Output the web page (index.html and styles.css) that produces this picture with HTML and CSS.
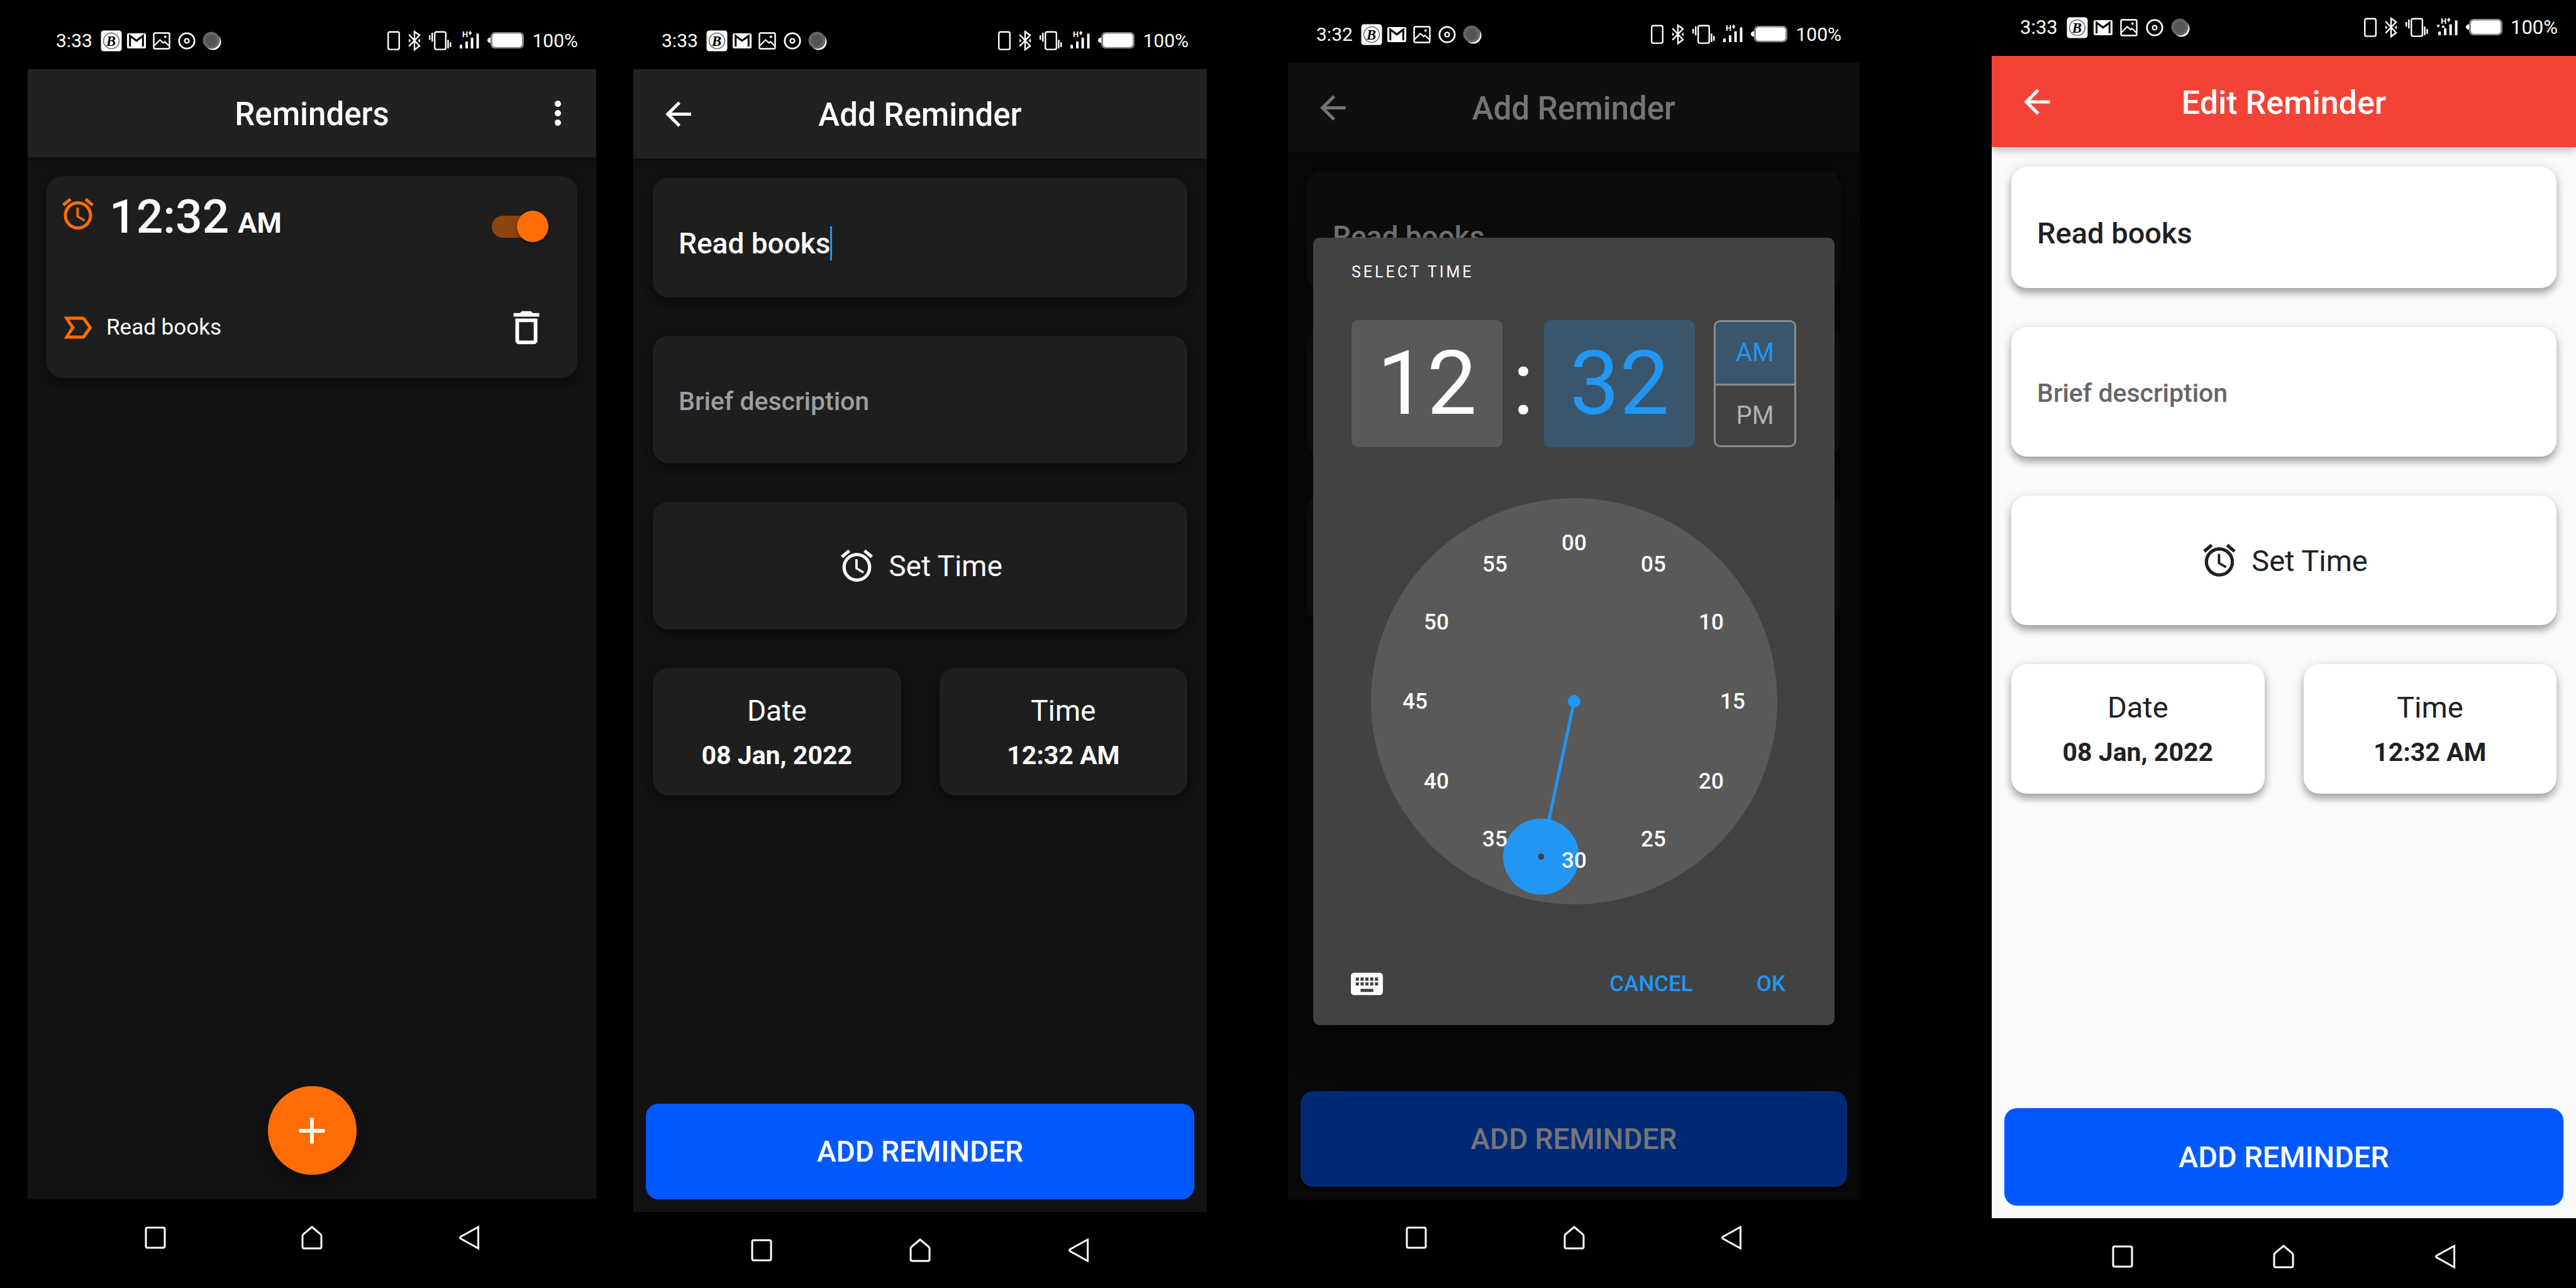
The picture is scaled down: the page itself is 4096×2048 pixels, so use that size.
FILE: index.html
```html
<!DOCTYPE html>
<html lang="en">
<head>
<meta charset="utf-8">
<meta name="viewport" content="width=device-width, initial-scale=1">
<title>Reminders</title>
<link rel="stylesheet" href="styles.css">
</head>
<body>
<svg class="sprite" aria-hidden="true">
  <symbol id="i-app" viewBox="0 0 34 34">
    <rect x=".5" y=".5" width="33" height="33" rx="4.5" fill="#fff"/>
    <circle cx="17" cy="17" r="12.4" fill="none" stroke="#666" stroke-width="1.5"/>
    <text x="16.5" y="25" text-anchor="middle" class="glyph-b">B</text>
  </symbol>
  <symbol id="i-mail" viewBox="0 0 34 34">
    <rect x="2" y="5" width="30" height="24" rx="2.5" fill="#fff"/>
    <path d="M6.7 26V9L17 16.8 27.3 9V26" fill="none" stroke="#000" stroke-width="3"/>
  </symbol>
  <symbol id="i-image" viewBox="0 0 34 34" fill="none" stroke="#fff">
    <rect x="4.5" y="4.5" width="25" height="25" rx="2" stroke-width="2.4"/>
    <path d="M5 24.8 14.4 15.4 19.8 20.2 21.8 18.2 29 25" stroke-width="2.2"/>
    <circle cx="22.8" cy="10.6" r="2" fill="#fff" stroke="none"/>
  </symbol>
  <symbol id="i-target" viewBox="0 0 34 34" fill="none" stroke="#fff">
    <circle cx="17" cy="17" r="12.2" stroke-width="2.8"/>
    <circle cx="17" cy="17" r="3.4" stroke-width="2.4"/>
  </symbol>
  <symbol id="i-disc" viewBox="0 0 34 34">
    <circle cx="18.5" cy="18.5" r="13" fill="#fff"/>
    <circle cx="16" cy="16" r="13.6" fill="#555"/>
    <circle cx="16" cy="16" r="11" fill="none" stroke="#868686" stroke-width="4" stroke-dasharray="1 2"/>
  </symbol>
  <symbol id="i-sim" viewBox="0 0 20 34">
    <rect x="1.2" y="2.8" width="17.6" height="27.8" rx="2.6" fill="none" stroke="#fff" stroke-width="2.4"/>
  </symbol>
  <symbol id="i-bt" viewBox="0 0 20 34">
    <path d="M1.2 7 18 25 10 31V2.2L18 8 1.2 25.6" fill="none" stroke="#fff" stroke-width="2.4"/>
    <path d="M1 13.5 4.6 16.4 1 19.4zM19 13.5 15.4 16.4 19 19.4z" fill="#fff"/>
  </symbol>
  <symbol id="i-vib" viewBox="0 0 36 34">
    <rect x="9.2" y="2.8" width="17.6" height="27.8" rx="2.6" fill="none" stroke="#fff" stroke-width="2.4"/>
    <path d="M0 8h2.5v7.3H0zM4 4h2.5v14.3H4zM29.2 15.3h2.5V29h-2.5zM33 19.3h2.5v7.4H33z" fill="#fff"/>
  </symbol>
  <symbol id="i-signal" viewBox="0 0 31 34">
    <path d="M0 23.2h4V29H0zM9 18h4v11H9zM17.6 11.8h4V29h-4zM26.5 5.5h4V29h-4z" fill="#fff"/>
    <text x="4" y="10.5" class="glyph-h">H</text>
    <path d="M14 4.6 16.6 1 19.2 4.6 16.6 8.2z" fill="#fff"/>
  </symbol>
  <symbol id="i-signal-data" viewBox="0 0 34 34">
    <path d="M3 23.2h4V29H3zM12 18h4v11h-4zM20.6 11.8h4V29h-4zM29.5 5.5h4V29h-4z" fill="#fff"/>
    <text x="7" y="10.5" class="glyph-h">H</text>
    <path d="M17 4.6 19.6 1 22.2 4.6 19.6 8.2zM0 12.5h6L3 17zM8 17h6l-3-4.5z" fill="#fff"/>
  </symbol>
  <symbol id="i-batt" viewBox="0 0 58 34">
    <path d="M5 11.5v9c-3-.3-5-2-5-4.5s2-4.2 5-4.5z" fill="#fff"/>
    <rect x="5" y="3" width="53" height="26.2" rx="7" fill="#858585"/>
    <rect x="8" y="5.4" width="47" height="21.4" rx="5" fill="#fff"/>
  </symbol>
  <symbol id="i-back" viewBox="0 0 24 24"><path d="M20 11H7.83l5.59-5.59L12 4l-8 8 8 8 1.41-1.41L7.83 13H20v-2z" fill="currentColor"/></symbol>
  <symbol id="i-more" viewBox="0 0 24 24"><path d="M12 8c1.1 0 2-.9 2-2s-.9-2-2-2-2 .9-2 2 .9 2 2 2zm0 2c-1.1 0-2 .9-2 2s.9 2 2 2 2-.9 2-2-.9-2-2-2zm0 6c-1.1 0-2 .9-2 2s.9 2 2 2 2-.9 2-2-.9-2-2-2z" fill="currentColor"/></symbol>
  <symbol id="i-alarm" viewBox="0 0 24 24"><path d="M22 5.72l-4.6-3.86-1.29 1.53 4.6 3.86L22 5.72zM7.88 3.39L6.6 1.86 2 5.71l1.29 1.53 4.59-3.85zM12.5 8H11v6l4.75 2.85.75-1.23-4-2.37V8zM12 4c-4.97 0-9 4.03-9 9s4.02 9 9 9a9 9 0 0 0 0-18zm0 16c-3.87 0-7-3.13-7-7s3.13-7 7-7 7 3.13 7 7-3.13 7-7 7z" fill="currentColor"/></symbol>
  <symbol id="i-label" viewBox="0 0 24 24"><path d="M15 19H3l4.5-7L3 5h12c.65 0 1.26.31 1.63.84L21 12l-4.37 6.16c-.37.52-.98.84-1.63.84zm-8.5-2H15l3.5-5L15 7H6.5l3.5 5-3.5 5z" fill="currentColor"/></symbol>
  <symbol id="i-trash" viewBox="0 0 24 24"><path d="M6 19c0 1.1.9 2 2 2h8c1.1 0 2-.9 2-2V7H6v12zM8 9h8v10H8V9zm7.5-5l-1-1h-5l-1 1H5v2h14V4h-3.5z" fill="currentColor"/></symbol>
  <symbol id="i-plus" viewBox="0 0 24 24"><path d="M19 13h-6v6h-2v-6H5v-2h6V5h2v6h6v2z" fill="currentColor"/></symbol>
  <symbol id="i-keys" viewBox="0 0 24 24"><path d="M20 5H4c-1.1 0-1.99.9-1.99 2L2 17c0 1.1.9 2 2 2h16c1.1 0 2-.9 2-2V7c0-1.1-.9-2-2-2zm-9 3h2v2h-2V8zm0 3h2v2h-2v-2zM8 8h2v2H8V8zm0 3h2v2H8v-2zm-1 2H5v-2h2v2zm0-3H5V8h2v2zm9 7H8v-2h8v2zm0-4h-2v-2h2v2zm0-3h-2V8h2v2zm3 3h-2v-2h2v2zm0-3h-2V8h2v2z" fill="currentColor"/></symbol>
  <symbol id="i-recent" viewBox="0 0 40 40"><rect x="5" y="4" width="30" height="32" rx="2.5" fill="none" stroke="#fff" stroke-width="3"/></symbol>
  <symbol id="i-home" viewBox="0 0 40 40"><path d="M20 3 33.5 14.3Q35 15.7 35 17.5V34.5Q35 37 32.5 37H7.5Q5 37 5 34.5V17.5Q5 15.7 6.5 14.3Z" fill="none" stroke="#fff" stroke-width="3"/></symbol>
  <symbol id="i-prev" viewBox="0 0 40 40"><path d="M34.5 3V37L6.5 21.6Q4.5 20 6.5 18.4Z" fill="none" stroke="#fff" stroke-width="3"/></symbol>
</svg>

<main class="gallery">
  <section class="phone phone-list" aria-label="Reminder list">
    <div class="status">
      <div class="status-group notices">
        <span class="clock">3:33</span>
        <svg class="note"><use href="#i-app"/></svg><svg class="note"><use href="#i-mail"/></svg><svg class="note"><use href="#i-image"/></svg><svg class="note"><use href="#i-target"/></svg><svg class="note"><use href="#i-disc"/></svg>
      </div>
      <div class="status-group system">
        <svg class="w20"><use href="#i-sim"/></svg><svg class="w20"><use href="#i-bt"/></svg><svg class="w36"><use href="#i-vib"/></svg><svg class="w31"><use href="#i-signal"/></svg><svg class="w58"><use href="#i-batt"/></svg>
        <span>100%</span>
      </div>
    </div>
    <div class="app">
      <header class="appbar">
        <h1>Reminders</h1>
        <button class="icon-button more" aria-label="More options"><svg class="icon"><use href="#i-more"/></svg></button>
      </header>
      <div class="content">
        <article class="card reminder">
          <div class="row row-time">
            <svg class="icon accent"><use href="#i-alarm"/></svg>
            <p class="time"><span>12:32</span> <small>AM</small></p>
            <input class="switch" type="checkbox" role="switch" checked aria-label="Reminder on">
          </div>
          <div class="row row-name">
            <svg class="icon accent"><use href="#i-label"/></svg>
            <p class="name">Read books</p>
            <button class="icon-button" aria-label="Delete reminder"><svg class="icon icon-large"><use href="#i-trash"/></svg></button>
          </div>
        </article>
        <button class="fab" aria-label="New reminder"><svg class="icon icon-large"><use href="#i-plus"/></svg></button>
      </div>
    </div>
    <nav class="navbar" aria-label="System">
      <button aria-label="Recent apps"><svg><use href="#i-recent"/></svg></button><button aria-label="Home"><svg><use href="#i-home"/></svg></button><button aria-label="Back"><svg><use href="#i-prev"/></svg></button>
    </nav>
  </section>

  <section class="phone phone-add" aria-label="Add reminder">
    <div class="status">
      <div class="status-group notices">
        <span class="clock">3:33</span>
        <svg class="note"><use href="#i-app"/></svg><svg class="note"><use href="#i-mail"/></svg><svg class="note"><use href="#i-image"/></svg><svg class="note"><use href="#i-target"/></svg><svg class="note"><use href="#i-disc"/></svg>
      </div>
      <div class="status-group system">
        <svg class="w20"><use href="#i-sim"/></svg><svg class="w20"><use href="#i-bt"/></svg><svg class="w36"><use href="#i-vib"/></svg><svg class="w31"><use href="#i-signal"/></svg><svg class="w58"><use href="#i-batt"/></svg>
        <span>100%</span>
      </div>
    </div>
    <div class="app">
      <header class="appbar">
        <button class="icon-button back" aria-label="Back"><svg class="icon"><use href="#i-back"/></svg></button>
        <h1>Add Reminder</h1>
      </header>
      <form class="content">
        <div class="fields">
          <label class="card field field-title"><input type="text" value="Read books" size="10" aria-label="Title"><span class="caret"></span></label>
          <label class="card field field-note"><input type="text" placeholder="Brief description" aria-label="Brief description"></label>
          <button type="button" class="card set-time"><svg class="icon"><use href="#i-alarm"/></svg>Set Time</button>
          <div class="pair">
            <div class="card fact"><span>Date</span><strong>08 Jan, 2022</strong></div>
            <div class="card fact"><span>Time</span><strong>12:32 AM</strong></div>
          </div>
        </div>
        <button type="button" class="submit">ADD REMINDER</button>
      </form>
    </div>
    <nav class="navbar" aria-label="System">
      <button aria-label="Recent apps"><svg><use href="#i-recent"/></svg></button><button aria-label="Home"><svg><use href="#i-home"/></svg></button><button aria-label="Back"><svg><use href="#i-prev"/></svg></button>
    </nav>
  </section>

  <section class="phone phone-picker" aria-label="Select time">
    <div class="status">
      <div class="status-group notices">
        <span class="clock">3:32</span>
        <svg class="note"><use href="#i-app"/></svg><svg class="note"><use href="#i-mail"/></svg><svg class="note"><use href="#i-image"/></svg><svg class="note"><use href="#i-target"/></svg><svg class="note"><use href="#i-disc"/></svg>
      </div>
      <div class="status-group system">
        <svg class="w20"><use href="#i-sim"/></svg><svg class="w20"><use href="#i-bt"/></svg><svg class="w36"><use href="#i-vib"/></svg><svg class="w31"><use href="#i-signal"/></svg><svg class="w58"><use href="#i-batt"/></svg>
        <span>100%</span>
      </div>
    </div>
    <div class="app">
      <header class="appbar">
        <button class="icon-button back" aria-label="Back"><svg class="icon"><use href="#i-back"/></svg></button>
        <h1>Add Reminder</h1>
      </header>
      <form class="content">
        <div class="fields">
          <label class="card field field-title"><input type="text" value="Read books" size="10" aria-label="Title"></label>
          <div class="card field field-note"></div>
          <div class="card set-time"></div>
        </div>
        <button type="button" class="submit">ADD REMINDER</button>
      </form>
      <div class="scrim">
        <div class="dialog" role="dialog" aria-label="Select time">
          <h2>SELECT TIME</h2>
          <div class="digits">
            <button class="digit">12</button>
            <span class="colon">:</span>
            <button class="digit selected">32</button>
            <div class="period">
              <button class="selected">AM</button>
              <button>PM</button>
            </div>
          </div>
          <svg class="dial" viewBox="0 0 646 646" role="img" aria-label="Minute dial">
            <circle cx="323" cy="323" r="323" fill="#595959"/>
            <g fill="#2196f3">
              <path d="M323 323 270.5 570" stroke="#2196f3" stroke-width="5"/>
              <circle cx="323" cy="323" r="10"/>
              <circle cx="270.5" cy="570" r="60.5"/>
            </g>
            <circle cx="270.5" cy="570" r="5" fill="#424242"/>
            <g class="ticks">
              <text x="323" y="83">00</text><text x="449" y="117">05</text><text x="541" y="209">10</text><text x="575" y="335">15</text>
              <text x="541" y="462">20</text><text x="449" y="554">25</text><text x="323" y="588">30</text><text x="197" y="554">35</text>
              <text x="104" y="462">40</text><text x="70" y="335">45</text><text x="104" y="209">50</text><text x="197" y="117">55</text>
            </g>
          </svg>
          <div class="actions">
            <button class="icon-button" aria-label="Keyboard input"><svg class="icon"><use href="#i-keys"/></svg></button>
            <button class="text-button">CANCEL</button>
            <button class="text-button">OK</button>
          </div>
        </div>
      </div>
    </div>
    <nav class="navbar" aria-label="System">
      <button aria-label="Recent apps"><svg><use href="#i-recent"/></svg></button><button aria-label="Home"><svg><use href="#i-home"/></svg></button><button aria-label="Back"><svg><use href="#i-prev"/></svg></button>
    </nav>
  </section>

  <section class="phone phone-edit" aria-label="Edit reminder">
    <div class="status">
      <div class="status-group notices">
        <span class="clock">3:33</span>
        <svg class="note"><use href="#i-app"/></svg><svg class="note"><use href="#i-mail"/></svg><svg class="note"><use href="#i-image"/></svg><svg class="note"><use href="#i-target"/></svg><svg class="note"><use href="#i-disc"/></svg>
      </div>
      <div class="status-group system">
        <svg class="w20"><use href="#i-sim"/></svg><svg class="w20"><use href="#i-bt"/></svg><svg class="w36"><use href="#i-vib"/></svg><svg class="w34"><use href="#i-signal-data"/></svg><svg class="w58"><use href="#i-batt"/></svg>
        <span>100%</span>
      </div>
    </div>
    <div class="app">
      <header class="appbar">
        <button class="icon-button back" aria-label="Back"><svg class="icon"><use href="#i-back"/></svg></button>
        <h1>Edit Reminder</h1>
      </header>
      <form class="content">
        <div class="fields">
          <label class="card field field-title"><input type="text" value="Read books" size="10" aria-label="Title"></label>
          <label class="card field field-note"><input type="text" placeholder="Brief description" aria-label="Brief description"></label>
          <button type="button" class="card set-time"><svg class="icon"><use href="#i-alarm"/></svg>Set Time</button>
          <div class="pair">
            <div class="card fact"><span>Date</span><strong>08 Jan, 2022</strong></div>
            <div class="card fact"><span>Time</span><strong>12:32 AM</strong></div>
          </div>
        </div>
        <button type="button" class="submit">ADD REMINDER</button>
      </form>
    </div>
    <nav class="navbar" aria-label="System">
      <button aria-label="Recent apps"><svg><use href="#i-recent"/></svg></button><button aria-label="Home"><svg><use href="#i-home"/></svg></button><button aria-label="Back"><svg><use href="#i-prev"/></svg></button>
    </nav>
  </section>
</main>
</body>
</html>
```
FILE: styles.css
```css
*, *::before, *::after { box-sizing: border-box; }

body {
  margin: 0;
  background: #000;
  color: #fff;
  font-family: Roboto, "Noto Sans", sans-serif;
}

h1, h2, p { margin: 0; }

button, input {
  margin: 0;
  padding: 0;
  border: 0;
  background: none;
  color: inherit;
  font: inherit;
}

button { cursor: pointer; }

svg { display: block; flex: none; }

.sprite { display: none; }

.glyph-b { font: italic 700 23px "Liberation Serif", serif; fill: #000; }
.glyph-h { font: 700 13px Roboto, sans-serif; fill: #fff; }

/* Four screens side by side, separated by uneven gutters */
.gallery {
  display: grid;
  grid-template-columns: 44fr 904fr 59fr 912fr 129fr 909fr 210fr 929fr;
  min-height: 100vh;
}

.phone {
  --status: 110px;
  --status-text: 30px;
  --note-gap: 6px;
  --bar: 142px;
  --nav: 121px;
  --edge: 30px;
  --gap: 61px;
  --title: 51px;
  --heading: 46px;
  --text: 41px;
  --icon: 61px;
  --card: 203px;
  --card-first: 190px;
  --submit: 152px;
  --surface: #1e1e1e;
  --page: #121212;
  --bar-color: #212121;
  --hint: #9e9e9e;
  --shadow: 0 7px 12px rgba(0, 0, 0, .3), 0 2px 20px rgba(0, 0, 0, .14);
  display: flex;
  flex-direction: column;
  min-width: 0;
}

.phone-list { grid-column: 2; --bar: 140px; --nav: 141px; --icon: 60px; }
.phone-add { grid-column: 4; --edge: 31px; }
.phone-picker { grid-column: 6; --status: 100px; --nav: 141px; --gap: 60px; }
.phone-edit {
  grid-column: 8;
  --status: 89px;
  --status-text: 31px;
  --note-gap: 7px;
  --bar: 145px;
  --nav: 111px;
  --edge: 31px;
  --gap: 62px;
  --title: 52px;
  --heading: 47px;
  --icon: 62px;
  --card: 206px;
  --card-first: 193px;
  --submit: 155px;
  --surface: #fff;
  --page: #fafafa;
  --bar-color: #f44336;
  --hint: #666;
  --shadow: 0 8px 12px rgba(0, 0, 0, .3), 0 2px 20px rgba(0, 0, 0, .12);
}

/* Status bar */
.status {
  display: flex;
  justify-content: space-between;
  align-items: flex-end;
  height: var(--status);
  padding: 0 29px 28px 45px;
  font-size: var(--status-text);
  line-height: 34px;
}

.status-group { display: flex; align-items: center; }
.notices { gap: var(--note-gap); }
.clock { margin-right: 7px; }
.system { gap: 13px; }
.status svg { height: 34px; }
.note { width: 34px; }
.w20 { width: 20px; }
.w31 { width: 31px; }
.w34 { width: 34px; }
.w36 { width: 36px; }
.w58 { width: 58px; }

/* App frame */
.app {
  position: relative;
  display: flex;
  flex: 1;
  flex-direction: column;
  background: var(--page);
}

.appbar {
  position: relative;
  z-index: 1;
  display: grid;
  grid-template-columns: 1fr auto 1fr;
  align-items: center;
  height: var(--bar);
  background: var(--bar-color);
  box-shadow: 0 5px 12px rgba(0, 0, 0, .26);
}

.appbar h1 {
  grid-column: 2;
  padding-top: 4px;
  font-size: var(--title);
  font-weight: 500;
  line-height: 60px;
}

.icon { width: var(--icon); height: var(--icon); }
.icon-large { width: 70px; height: 70px; }
.icon-button { display: block; }
.back { justify-self: start; margin-left: 41px; }
.more { justify-self: end; margin-right: 31px; }
.accent { color: #ff6d04; }

.content { display: flex; flex: 1; flex-direction: column; }

.card {
  border-radius: 25px;
  background: var(--surface);
  box-shadow: var(--shadow);
}

/* Reminder list */
.reminder { margin: 30px 30px 0; padding: 20px 46px 45px 20px; }
.row { display: flex; }
.row-time { align-items: flex-start; gap: 20px; }
.row-time .icon { margin-top: 10px; }
.row-name { align-items: center; gap: 15px; margin-top: 98px; }
.time {
  display: flex;
  flex: 1;
  align-items: baseline;
  gap: 14px;
  font-size: 75px;
  font-weight: 500;
  line-height: 88px;
}
.time small { font-size: 45px; font-weight: 700; line-height: 54px; }
.name { flex: 1; font-size: 35px; line-height: 42px; }

.switch {
  position: relative;
  width: 90px;
  height: 50px;
  margin-top: 35px;
  appearance: none;
}

.switch::before {
  content: "";
  position: absolute;
  top: 8px;
  left: 0;
  width: 83px;
  height: 35px;
  border-radius: 18px;
  background: #8e440f;
}

.switch::after {
  content: "";
  position: absolute;
  top: 0;
  left: 0;
  width: 50px;
  height: 50px;
  border-radius: 50%;
  background: #ff6d04;
  box-shadow: 0 3px 6px rgba(0, 0, 0, .35);
}

.switch:checked::after { left: 40px; }

.fab {
  display: grid;
  place-items: center;
  align-self: center;
  width: 141px;
  height: 141px;
  margin: auto 0 39px;
  border-radius: 50%;
  background: #ff6d04;
  box-shadow: 0 12px 24px rgba(0, 0, 0, .35);
}

/* Reminder form */
.fields {
  display: flex;
  flex-direction: column;
  gap: var(--gap);
  padding: var(--edge);
}

.field, .set-time, .fact { display: flex; align-items: center; min-height: var(--card); }
.field { padding: 0 41px; font-weight: 500; }
.field input { outline: 0; }

.field-title {
  min-height: var(--card-first);
  padding-top: 18px;
  font-size: var(--heading);
}

.field-title input { height: 54px; field-sizing: content; }
.field-note { padding-top: 4px; font-size: var(--text); }
.field-note input { width: 100%; height: 48px; }
.field input::placeholder { color: var(--hint); opacity: 1; }
.caret { width: 3px; height: 54px; background: #2196f3; }

.set-time { justify-content: center; gap: 20px; font-size: var(--heading); }

.pair { display: grid; grid-template-columns: 1fr 1fr; gap: var(--gap); }
.fact {
  flex-direction: column;
  justify-content: center;
  gap: 20px;
  font-size: var(--heading);
  line-height: 54px;
}
.fact strong { font-size: var(--text); font-weight: 700; line-height: 48px; }

.submit {
  height: var(--submit);
  margin: auto 20px 20px;
  border-radius: 20px;
  background: #0059ff;
  color: #fff;
  font-size: var(--heading);
  font-weight: 500;
}

.phone-edit .content { color: #212121; }

/* Time picker */
.scrim {
  position: absolute;
  inset: 0;
  z-index: 2;
  display: grid;
  align-items: center;
  padding: 0 40px;
  background: rgba(0, 0, 0, .54);
}

.dialog {
  padding: 40px 61px 0;
  border-radius: 10px;
  background: #424242;
  box-shadow: 0 28px 60px 10px rgba(0, 0, 0, .3);
}

.dialog h2 {
  font-size: 25px;
  font-weight: 400;
  line-height: 30px;
  letter-spacing: 4px;
}

.digits {
  display: grid;
  grid-template-columns: 1fr 66px 1fr 161px;
  height: 202px;
  margin-top: 61px;
  font-size: 141px;
  line-height: 202px;
  text-align: center;
}

.digit { border-radius: 10px; background: #595959; }
.selected { background: #3a566c; color: #2196f3; }

.period {
  display: grid;
  grid-template-rows: 1fr 1fr;
  margin-left: 30px;
  border: 3px solid #8c8c8c;
  border-radius: 10px;
  overflow: hidden;
  color: #b0b0b0;
  font-size: 40px;
  line-height: 48px;
}

.period button + button { padding-top: 2px; border-top: 3px solid #8c8c8c; }

.dial { display: block; width: 646px; max-width: 100%; margin: 81px auto 60px; }
.ticks { fill: #fff; font-size: 35px; font-weight: 500; text-anchor: middle; }

.actions {
  display: flex;
  align-items: center;
  gap: 101px;
  height: 132px;
  padding: 2px 17px 0 0;
}
.actions .icon-button { margin: 0 auto 0 -6px; }
.text-button { color: #2196f3; font-size: 35px; font-weight: 500; }

/* System navigation */
.navbar {
  display: grid;
  grid-template-columns: repeat(3, 27.6%);
  justify-content: center;
  align-content: start;
  justify-items: center;
  height: var(--nav);
  padding-top: 41px;
}

.navbar svg { width: 40px; height: 40px; }
```
